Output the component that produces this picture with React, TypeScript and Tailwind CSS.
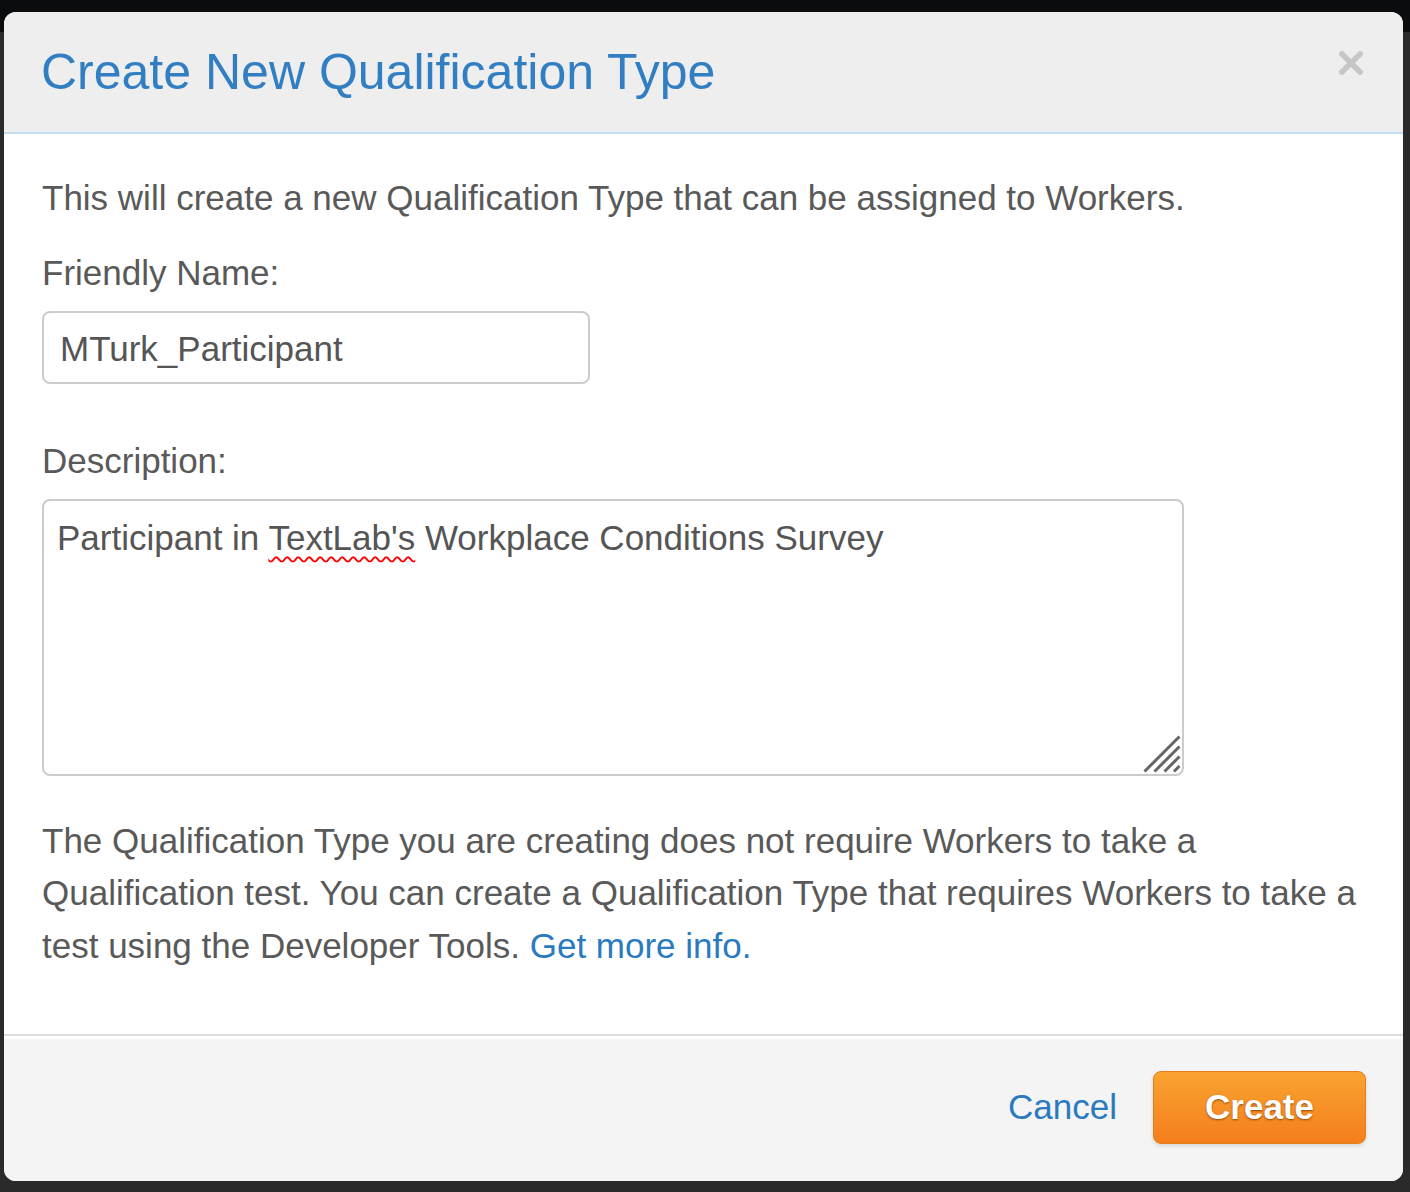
import React from "react";

export default function App() {
  return (
    <div className="w-[1410px] h-[1192px] overflow-hidden bg-[linear-gradient(to_bottom,#0b0c0e_0px,#0b0c0e_32px,#2a2a2a_32px)] pt-[12px] pl-[4px] font-['Liberation_Sans',Arial,sans-serif]">
      <div className="w-[1399px] h-[1169px] rounded-[12px] bg-white overflow-hidden flex flex-col">
        {/* Header */}
        <div className="h-[122px] bg-[#eeeeee] border-b-2 border-[#c5ddf1] pl-[37px] pr-[38px] pt-[33px] flex items-start justify-between shrink-0">
          <h4 className="text-[50px] leading-[55px] text-[#317ec2] font-normal">
            Create New Qualification Type
          </h4>
          <svg width="24" height="24" viewBox="0 0 24 24" className="mt-[6px] mr-[2px]">
            <path d="M3 3 L21 21 M21 3 L3 21" stroke="#c6c6c6" strokeWidth="5.5" strokeLinecap="square" />
          </svg>
        </div>

        {/* Body */}
        <div className="px-[38px] pt-[38px] pb-[62px] border-b-2 border-[#dddddd] text-[35px] leading-[52.5px] text-[#595959]">
          <p className="mb-[22px]">
            This will create a new Qualification Type that can be assigned to Workers.
          </p>
          <label className="block mb-[12px]">Friendly Name:</label>
          <div className="w-[548px] h-[73px] border-2 border-[#cccccc] rounded-[8px] pl-[16px] pt-[4px] flex items-center text-[35px] leading-normal text-[#555555]">
            MTurk_Participant
          </div>
          <label className="block mt-[51px] mb-[11px]">Description:</label>
          <div className="relative w-[1142px] h-[277px] border-2 border-[#cccccc] rounded-[8px] pl-[13px] pt-[12px] leading-[50px] text-[#555555]">
            Participant in{" "}
            <span className="underline decoration-wavy decoration-[#ff0000] decoration-[1.5px] underline-offset-[6px]">
              TextLab's
            </span>{" "}
            Workplace Conditions Survey
            <svg
              width="40"
              height="40"
              viewBox="0 0 40 40"
              className="absolute right-[-1px] bottom-[-1px]"
            >
              <g stroke="#666666" strokeWidth="3" strokeLinecap="butt">
                <path d="M1.5 36.5 L36.5 1.5" />
                <path d="M11.5 36.5 L36.5 11.5" />
                <path d="M21.5 36.5 L36.5 21.5" />
                <path d="M31 36.5 L36.5 31" />
              </g>
            </svg>
          </div>
          <p className="mt-[39px]">
            The Qualification Type you are creating does not require Workers to take a Qualification test. You can create a Qualification Type that requires Workers to take a test using the Developer Tools.{" "}
            <span className="text-[#2a7ac0]">Get more info.</span>
          </p>
        </div>

        {/* Footer */}
        <div className="mt-[3px] flex-1 bg-[#f4f4f4] flex items-start justify-end pr-[37px] pt-[32px]">
          <div className="flex items-center gap-[36px] h-[73px]">
            <span className="text-[35px] leading-normal text-[#2a7ac0]">Cancel</span>
            <button className="w-[213px] h-[73px] rounded-[8px] border border-[#e67d1c] bg-[linear-gradient(to_bottom,#f9a330,#f47e1d)] text-white font-bold text-[35px] leading-normal [text-shadow:0_1px_2px_rgba(110,50,0,0.75)] shadow-[0_2px_4px_rgba(0,0,0,0.12)]">
              Create
            </button>
          </div>
        </div>
      </div>
    </div>
  );
}
